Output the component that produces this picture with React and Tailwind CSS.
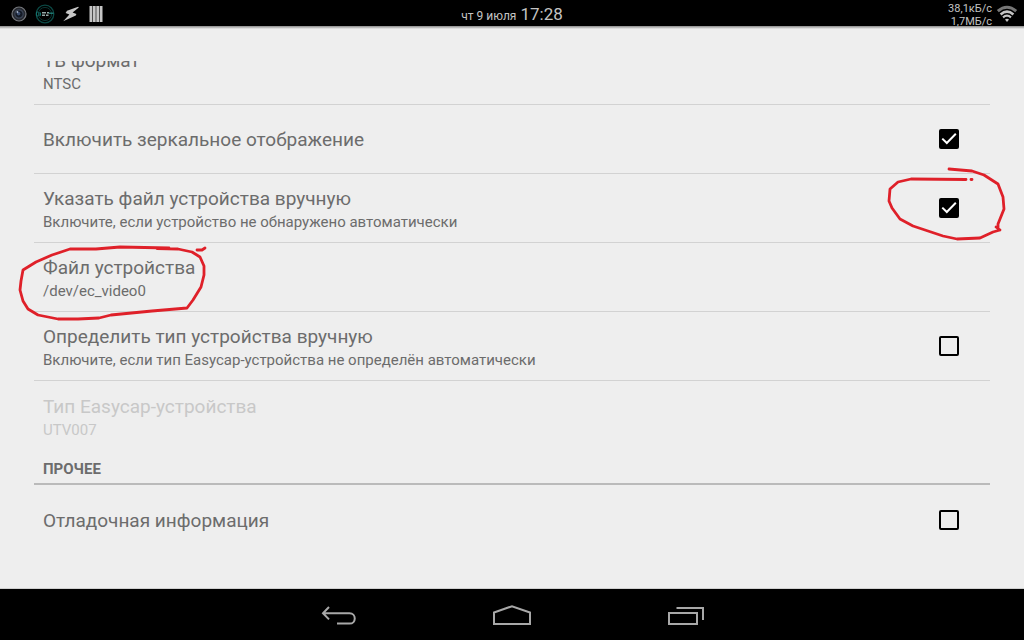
import React, { useId, useState } from 'react';

function Summary({ title, summary }) {
  return (
    <span className={`flex min-w-0 flex-1 flex-col ${summary ? 'pt-1' : 'pt-0.5'}`}>
      <span className="text-[19px] leading-6">{title}</span>
      {summary && <span className="text-[15px] leading-[22px]">{summary}</span>}
    </span>
  );
}

function LinkRow({ title, summary, disabled, divider = true, className = '', children }) {
  return (
    <li className={`relative h-[69px] ${divider ? 'border-b border-[#d2d2d2]' : ''} ${className}`}>
      <button
        type="button"
        disabled={disabled}
        className="flex h-full w-full items-center pr-8 pl-[9px] text-left text-[#6c6c6c] disabled:text-[#c8c8c8]"
      >
        <Summary title={title} summary={summary} />
      </button>
      {children}
    </li>
  );
}

function CheckRow({ title, summary, initial = false, divider = true, children }) {
  const id = useId();
  const [on, setOn] = useState(initial);
  return (
    <li className={`relative h-[69px] ${divider ? 'border-b border-[#d2d2d2]' : ''}`}>
      <label htmlFor={id} className="flex h-full items-center pr-[31px] pl-[9px] text-[#6c6c6c]">
        <Summary title={title} summary={summary} />
        <span className="grid size-5 shrink-0">
          <input
            id={id}
            type="checkbox"
            checked={on}
            onChange={(e) => setOn(e.target.checked)}
            className="col-start-1 row-start-1 m-0 size-5 appearance-none rounded-[2px] border-2 border-black checked:bg-black"
          />
          {on && (
            <svg viewBox="0 0 20 20" className="pointer-events-none col-start-1 row-start-1 size-5" fill="none" stroke="#fff" strokeWidth="2" aria-hidden="true">
              <path d="M3.3 9.6 L7.8 14 L16.8 4.8" />
            </svg>
          )}
        </span>
      </label>
      {children}
    </li>
  );
}

function StatusBar() {
  return (
    <header className="grid h-[26px] shrink-0 grid-cols-[1fr_auto_1fr] items-center bg-black text-[#c4c4c4]">
      <div className="flex items-center gap-2 pl-[11px]">
        <svg viewBox="0 0 16 16" className="size-4" aria-hidden="true">
          <circle cx="8" cy="8" r="7" fill="#26292f" stroke="#75777c" strokeWidth="1.2" />
          <circle cx="8" cy="8" r="4.2" fill="#141a25" stroke="#3c4557" strokeWidth="1.2" />
          <circle cx="7.6" cy="7.6" r="1.8" fill="#3d4f70" />
          <circle cx="6.4" cy="6" r="0.9" fill="#a9b6cc" />
        </svg>
        <svg viewBox="0 0 20 20" className="size-5" fill="none" aria-hidden="true">
          <circle cx="10" cy="10" r="8.8" stroke="#0b4844" strokeWidth="1.3" />
          <circle cx="10" cy="10" r="6.6" stroke="#0a3532" strokeWidth="1" />
          <path d="M3.2 8 H1.5 V12 H3.2 M4 8 V12 M5.5 8.5 V11.8" stroke="#14706a" strokeWidth="1" />
          <path d="M7 8.7 H11 M12 8.7 H14 M7 11.3 H10 M11 11.3 H13.5" stroke="#94a8a7" strokeWidth="1.4" />
          <path d="M14 9.2 H18.5" stroke="#258b83" strokeWidth="1.2" />
        </svg>
        <svg viewBox="0 0 16 16" className="size-4" fill="#c6c6c6" aria-hidden="true">
          <path d="M15.2 0.8 L4 4.8 L2.6 7 L6.4 8.6 L0.2 15.2 L12.8 9.6 L13.4 8 L9.6 6.6 L15.8 1.6 Z" />
        </svg>
        <svg viewBox="0 0 14 16" className="ml-0.5 h-4 w-3.5" fill="#c6c6c6" aria-hidden="true">
          <path d="M0.5 0 H3.3 V16 H0.5 Z M3.9 0 H6.7 V16 H3.9 Z M7.3 0 H10.1 V16 H7.3 Z M10.7 0 H13.5 V16 H10.7 Z" />
        </svg>
      </div>
      <p className="flex items-baseline gap-1 leading-5">
        <span className="text-xs">чт 9 июля</span>
        <time className="text-[17px] leading-5">17:28</time>
      </p>
      <div className="flex items-center justify-end gap-1 pr-1.5">
        <p className="pt-0.5 text-right text-[11px] leading-[13px]">
          38,1кБ/с<br />1,7МБ/с
        </p>
        <svg viewBox="0 0 22 18" className="h-[18px] w-[22px]" fill="none" aria-hidden="true">
          <path d="M1.8 6.2 Q11 -1.6 20.2 6.2" stroke="#777" strokeWidth="3" />
          <path d="M4.6 9.4 Q11 3.8 17.4 9.4" stroke="#c4c4c4" strokeWidth="2.6" />
          <path d="M7 12.4 Q11 9 15 12.4" stroke="#c4c4c4" strokeWidth="2.2" />
          <path d="M9 14.6 Q11 13 13 14.6 L11 17 Z" fill="#c4c4c4" />
        </svg>
      </div>
    </header>
  );
}

function NavBar() {
  return (
    <nav className="flex h-[51px] shrink-0 items-center justify-center bg-black pt-0.5 text-[#a8a8a8]">
      <button type="button" aria-label="Назад" className="flex w-[174px] justify-center">
        <svg viewBox="0 0 36 22" className="h-[22px] w-9" fill="none" stroke="currentColor" strokeWidth="2" aria-hidden="true">
          <path d="M9 2 L3 8.2 L9 14.4 M3 8.2 H29.5 C36.5 8.2 36.5 18.6 29.5 18.6 H17" />
        </svg>
      </button>
      <button type="button" aria-label="Домой" className="flex w-[174px] justify-center">
        <svg viewBox="0 0 40 22" className="h-[22px] w-10" fill="none" stroke="currentColor" strokeWidth="2" aria-hidden="true">
          <path d="M2 19 V7.5 L20 1.2 L38 7.5 V19 Z" />
        </svg>
      </button>
      <button type="button" aria-label="Недавние приложения" className="flex w-[174px] justify-center">
        <svg viewBox="0 0 36 22" className="h-[22px] w-9" fill="none" stroke="currentColor" strokeWidth="2" aria-hidden="true">
          <path d="M1 8 H29 V19 H1 Z M8.5 3 H35 V15" />
        </svg>
      </button>
    </nav>
  );
}

export default function App() {
  return (
    <div className="flex h-screen flex-col bg-[#eeeeee] font-[Roboto,sans-serif]">
      <StatusBar />
      <div className="h-[3px] shrink-0 bg-linear-to-b from-[#8a8a8a] to-[#eeeeee]" />
      <main className="min-h-0 flex-1 border-b border-[#cfcfcf] pt-8">
        <div className="h-full overflow-hidden px-[34px]">
          <ul>
            <LinkRow title="ТВ формат" summary="NTSC" className="-mt-[25px]" />
            <CheckRow title="Включить зеркальное отображение" initial />
            <CheckRow
              title="Указать файл устройства вручную"
              summary="Включите, если устройство не обнаружено автоматически"
              initial
            >
              <svg viewBox="884 164 126 80" className="pointer-events-none absolute -top-2.5 -right-5 z-10 h-20 w-[126px]" fill="none" stroke="#df2029" strokeWidth="2.8" strokeLinecap="round" strokeLinejoin="round" aria-hidden="true">
                <path d="M949 169 L972 171 L984 175 L998 184 L1003 197 L1004 209 L998 224 L998 229 M1000 230 L993 232 L980 238 L957 239 L943 236 L913 226 L900 219 L892 208 L889 201 L890 189 L898 182 L911 179 L966 179.5 M971 179.5 h1 M996 227 L1000 230" />
              </svg>
            </CheckRow>
            <LinkRow title="Файл устройства" summary="/dev/ec_video0">
              <svg viewBox="16 242 194 82" className="pointer-events-none absolute -top-px -left-[18px] z-10 h-[82px] w-[194px]" fill="none" stroke="#df2029" strokeWidth="2.8" strokeLinecap="round" strokeLinejoin="round" aria-hidden="true">
                <path d="M169 248 L120 247 L96 249 L70 249 L52 255 L36 262 L23 270 L21 281 L20 290 L23 301 L28 309 L38 315 L58 319 L78 319 L99 318 L111 315 L152 311 L187 308 L193 300 L201 287 L204 275 L204 266 L200 257 L192 252 L178 249 L157 248.5 M197 250 L202 250 L205 248" />
              </svg>
            </LinkRow>
            <CheckRow
              title="Определить тип устройства вручную"
              summary="Включите, если тип Easycap-устройства не определён автоматически"
            />
            <LinkRow title="Тип Easycap-устройства" summary="UTV007" disabled divider={false} />
          </ul>
          <h2 className="flex h-[35px] items-end border-b-2 border-[#bababa] pb-1 pl-[9px] text-[15px] leading-5 font-bold text-[#6c6c6c]">
            ПРОЧЕЕ
          </h2>
          <ul>
            <CheckRow title="Отладочная информация" divider={false} />
          </ul>
        </div>
      </main>
      <NavBar />
    </div>
  );
}
